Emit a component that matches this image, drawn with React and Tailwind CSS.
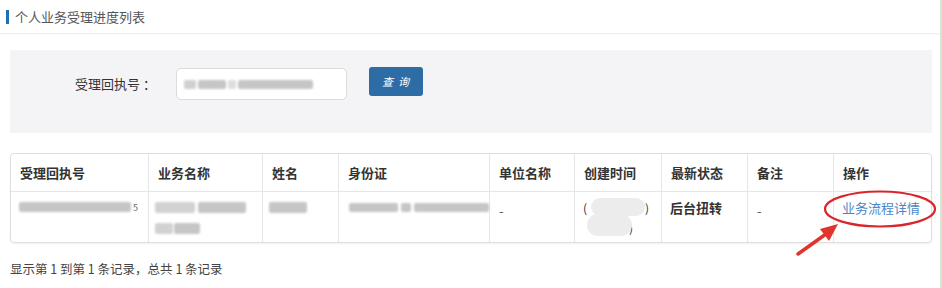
import React from "react";

const F = { fontFamily: '"Noto Sans CJK SC", "Noto Sans", sans-serif' };

function Blur({ w, h = 10, className = "" }) {
  return <div className={"rounded-[2px] bg-[#c6c6c6] blur-[0.8px] " + className} style={{ width: w, height: h }} />;
}

export default function App() {
  const cols = [
    ["受理回执号", 137],
    ["业务名称", 114],
    ["姓名", 76],
    ["身份证", 151],
    ["单位名称", 85],
    ["创建时间", 87],
    ["最新状态", 86],
    ["备注", 86],
    ["操作", 98],
  ];
  return (
    <div className="w-[942px] h-[288px] bg-white flex overflow-hidden text-[#333]" style={F}>
      <div className="flex-1 flex flex-col">
        <div className="h-[34px] flex items-center pl-[6px] border-b border-[#f0f0f0] shadow-[0_1px_1px_rgba(0,0,0,0.02)]">
          <div className="w-[3px] h-[14px] bg-[#1e6fb5] mr-[6px]" />
          <span className="text-[13px] text-[#555] leading-none">个人业务受理进度列表</span>
        </div>
        <div className="pl-[10px] pr-[8px] pt-[16px]">
          <div className="h-[83px] bg-[#f4f4f6] flex items-start pt-[18px]">
            <div className="w-[166px] h-[32px] flex items-center justify-end pr-[20px] text-[13px] text-[#333]">受理回执号 ：</div>
            <div className="w-[171px] h-[32px] bg-white border border-[#dcdcdc] rounded-[5px] flex items-center pl-[7px]">
              <div className="flex gap-[2px]">
                <Blur w={12} h={9} className="bg-[#d0d0d0]" />
                <Blur w={28} h={9} />
                <Blur w={8} h={9} className="bg-[#dedede]" />
                <Blur w={75} h={9} />
              </div>
            </div>
            <div className="ml-[22px] -mt-[1px] w-[54px] h-[29px] bg-[#2e6ca6] rounded-[3px] flex items-center justify-center text-white text-[11px] italic tracking-[5px] pl-[4px]">查询</div>
          </div>
          <div className="mt-[20px] border border-[#dedede] rounded-[4px] shadow-[0_1px_2px_rgba(0,0,0,0.06)]">
            <div className="flex h-[38px] border-b border-[#e6e6e6]">
              {cols.map(([t, w], i) => (
                <div key={t} className={"flex items-center pl-[9px] text-[13px] font-bold text-[#333] " + (i > 0 ? "border-l border-[#e6e6e6]" : "")} style={{ width: w }}>{t}</div>
              ))}
            </div>
            <div className="flex h-[50px] text-[13px]">
              <div className="pl-[8px] pt-[10px]" style={{ width: 137 }}>
                <div className="flex items-center gap-[2px]"><Blur w={112} h={10} /><span className="text-[9px] text-[#666] leading-none">5</span></div>
              </div>
              <div className="border-l border-[#e6e6e6] pl-[6px] pt-[10px] flex flex-col gap-[10px]" style={{ width: 114 }}>
                <div className="flex gap-[3px]"><Blur w={40} h={11} className="bg-[#d2d2d2]" /><Blur w={48} h={11} className="bg-[#bdbdbd]" /></div>
                <div className="flex gap-[1px]"><Blur w={18} h={11} className="bg-[#d2d2d2]" /><Blur w={26} h={11} className="bg-[#bdbdbd]" /></div>
              </div>
              <div className="border-l border-[#e6e6e6] pl-[6px] pt-[10px]" style={{ width: 76 }}>
                <Blur w={38} h={11} />
              </div>
              <div className="border-l border-[#e6e6e6] pl-[10px] pt-[11px]" style={{ width: 151 }}>
                <div className="flex gap-[3px]"><Blur w={52} h={9} /><Blur w={10} h={9} className="bg-[#b8b8b8]" /><Blur w={80} h={9} /></div>
              </div>
              <div className="border-l border-[#e6e6e6] pl-[9px] pt-[9px] text-[#555]" style={{ width: 85 }}>-</div>
              <div className="border-l border-[#e6e6e6] pl-[8px] pt-[6px] relative" style={{ width: 87 }}>
                <div className="text-[12px] leading-[20px] text-[#333]">
                  <div className="flex justify-between w-[66px]"><span>(</span><span>)</span></div>
                  <div className="flex justify-between w-[50px]"><span>‘</span><span>)</span></div>
                </div>
                <div className="absolute left-[16px] top-[6px] w-[54px] h-[18px] rounded-full bg-[#ececec]" />
                <div className="absolute left-[12px] top-[22px] w-[45px] h-[22px] rounded-full bg-[#ececec]" />
              </div>
              <div className="border-l border-[#e6e6e6] pl-[8px] pt-[6px] font-bold text-[#333]" style={{ width: 86 }}>后台扭转</div>
              <div className="border-l border-[#e6e6e6] pl-[9px] pt-[9px] text-[#555]" style={{ width: 86 }}>-</div>
              <div className="border-l border-[#e6e6e6] pl-[8px] pt-[6px] text-[#4a87c6] relative" style={{ width: 98 }}>业务流程详情</div>
            </div>
          </div>
          <div className="mt-[16px] text-[12.5px] text-[#444] leading-[20px]">显示第 1 到第 1 条记录，总共 1 条记录</div>
        </div>
      </div>
      <div className="w-[4px] bg-[#d3e6cf]" />
      <svg className="absolute left-0 top-0 pointer-events-none" width="942" height="288">
        <ellipse cx="880" cy="209" rx="55" ry="17.5" fill="none" stroke="#d9262a" strokeWidth="2.2" />
        <line x1="798" y1="254" x2="826" y2="234" stroke="#e0342f" strokeWidth="3.5" strokeLinecap="round" />
        <polygon points="838,224 820,229 829,241" fill="#e0342f" />
      </svg>
    </div>
  );
}
